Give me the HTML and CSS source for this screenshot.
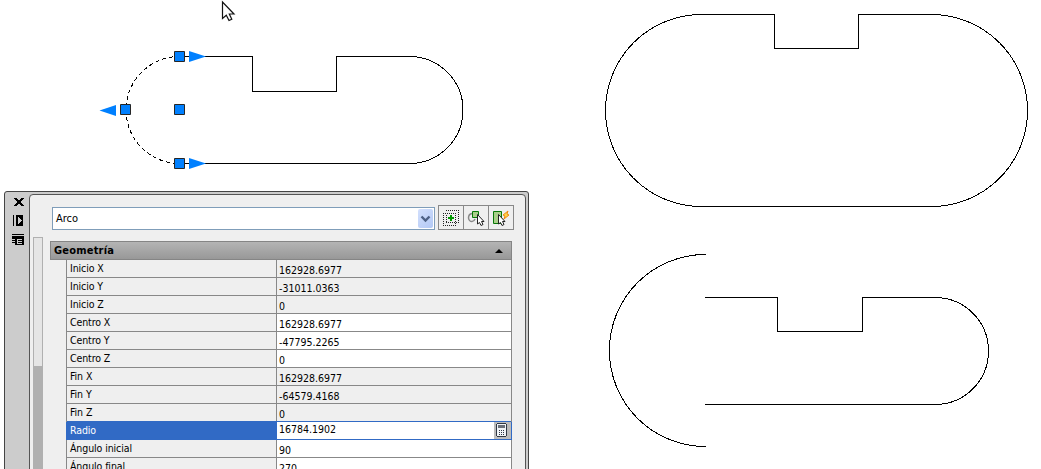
FILE: index.html
```html
<!DOCTYPE html>
<html lang="es">
<head>
<meta charset="utf-8">
<title>Propiedades</title>
<link rel="stylesheet" href="styles.css">
</head>
<body>
<main class="canvas">
  <svg class="drawing" width="1041" height="469" viewBox="0 0 1041 469">
    <g class="lines">
      <path d="M179.5 56.5H252.5V91.5H336.5V56.5H409.5A53.5 53.5 0 0 1 409.5 163.5H179.5"/>
      <path stroke-dasharray="4 3" d="M179.5 56.5A53.5 53.5 0 0 0 179.5 163.5"/>
      <path d="M701.5 14.5H774.5V48.5H858.5V14.5H931.5A96 96 0 0 1 931.5 206.5H701.5A96 96 0 0 1 701.5 14.5"/>
      <path d="M706 254.5H705.4A96 96 0 0 0 705.4 446.5H706"/>
      <path d="M705 297.5H777.5V331.5H862.5V297.5H935A53.5 53.5 0 0 1 935 404.5H705"/>
    </g>
    <g class="arrows">
      <path d="M189 51L206 56.5L189 62ZM189 158L206 163.5L189 169ZM116 105L99.500 110.5L116 116Z"/>
    </g>
    <g class="grips">
      <path d="M174.5 51.5h10v10h-10ZM120.5 104.500h10v10h-10ZM174.500 104.500h10v10h-10ZM174.500 158.500h10v10h-10Z"/>
    </g>
    <path class="pointer" d="M222.500 2V18.500L226.300 15.200L229 20.500L231.800 19.200L229.300 14H234Z"/>
  </svg>

  <section class="palette">
    <aside class="titlebar">
      <svg width="14" height="50" viewBox="0 0 14 50" shape-rendering="crispEdges">
        <path d="M3 1h3v1h1v1h2V2h1V1h3v1h-1v1h-1v1h-1v2h1v1h1v1h1v1h-3V8H9V7H7v1H6v1H3V8h1V7h1V6h1V4H5V3H4V2H3Z"/>
        <path d="M2 18h1v11H2ZM5 18h7v11H5Z"/>
        <path fill="#ccc" d="M7 20v7l4-3.500Z"/>
        <path d="M1 37h12v1H1ZM1 39h12v9H4v-2H1v-1h3v-1H1v-1h3v-1H1Z"/>
        <path fill="#ccc" d="M6 42h5v1H6ZM6 44h5v1H6ZM6 46h5v1H6ZM6 42h1v5H6Z"/>
      </svg>
    </aside>
    <div class="body">
      <div class="scroll"><div class="thumb"></div></div>
      <div class="content">
        <div class="tools">
          <div class="combo"><span>Arco</span>
            <span class="drop"><svg width="15" height="19" viewBox="0 0 15 19"><path fill="none" stroke="#4d6185" stroke-width="2.400" d="M3.500 7.500L7.500 11.500L11.500 7.500"/></svg></span>
          </div>
          <div class="buttons">
            <span class="tool"><svg width="24" height="23" viewBox="0 0 24 23" shape-rendering="crispEdges">
              <path fill="none" stroke="#222" stroke-dasharray="1 1" d="M7 4.500H20M19.500 4V17M4 7.500H17M4.500 7V20M4 19.500H17M16.500 7V20M7.500 9V17M7 16.500H20"/>
              <path fill="#009800" d="M11 9h2v2h2v2h-2v2h-2v-2H9v-2h2Z"/></svg></span>
            <span class="tool"><svg width="24" height="23" viewBox="0 0 24 23">
              <path fill="none" stroke="#888" stroke-width="1.500" d="M8 7.500Q4.500 8 4.500 12Q5 15.500 8 15.500Q10 15.500 11 13"/>
              <path fill="#aad08a" stroke="#087808" d="M8.500 5.500h6v6h-6Z"/>
              <path fill="#fff" stroke="#222" d="M13.500 8.500V18l2-1.500 1.500 3 2-1-1.500-3H20Z"/></svg></span>
            <span class="tool"><svg width="24" height="23" viewBox="0 0 24 23">
              <path fill="#aad08a" stroke="#087808" d="M4.500 5.500h8v12h-8Z"/>
              <path fill="#ffd34a" stroke="#f08a10" d="M19 5L14 9l2 1-1 3 5-4-2-1Z"/>
              <path fill="#fff" stroke="#222" d="M9.500 8.500V18l2-1.500 1.500 3 2-1-1.500-3H16Z"/></svg></span>
          </div>
        </div>
        <div class="group">
          <div class="head"><span>Geometría</span><i class="caret"></i></div>
          <div class="rows">
            <div class="row ro"><span class="name">Inicio X</span><span class="val">162928.6977</span></div>
            <div class="row ro"><span class="name">Inicio Y</span><span class="val">-31011.0363</span></div>
            <div class="row ro"><span class="name">Inicio Z</span><span class="val">0</span></div>
            <div class="row"><span class="name">Centro X</span><span class="val">162928.6977</span></div>
            <div class="row"><span class="name">Centro Y</span><span class="val">-47795.2265</span></div>
            <div class="row"><span class="name">Centro Z</span><span class="val">0</span></div>
            <div class="row ro"><span class="name">Fin X</span><span class="val">162928.6977</span></div>
            <div class="row ro"><span class="name">Fin Y</span><span class="val">-64579.4168</span></div>
            <div class="row ro before"><span class="name">Fin Z</span><span class="val">0</span></div>
            <div class="row selected"><span class="name">Radio</span><span class="val">16784.1902</span>
              <span class="calc"><svg width="17" height="17" viewBox="0 0 17 17" shape-rendering="crispEdges">
                <path fill="#303844" d="M3 1h9v1h1v12h-1v1H3v-1H2V2h1Z"/>
                <path fill="#f1f4f7" d="M3 2h9v12H3Z"/><path fill="#6b7079" d="M4 3h7v3H4Z"/>
                <path fill="#303844" d="M5 8h1v1H5ZM7 8h1v1H7ZM9 8h1v1H9ZM5 10h1v1H5ZM7 10h1v1H7ZM9 10h1v1H9ZM5 12h1v1H5ZM7 12h1v1H7ZM9 12h1v1H9Z"/></svg></span>
            </div>
            <div class="row"><span class="name">Ángulo inicial</span><span class="val">90</span></div>
            <div class="row"><span class="name">Ángulo final</span><span class="val">270</span></div>
          </div>
        </div>
      </div>
    </div>
  </section>
</main>
</body>
</html>
```
FILE: styles.css
```css
* { box-sizing: border-box; }
body { margin: 0; background: #fff; }
.canvas { position: relative; width: 1041px; height: 469px; overflow: hidden; font: 10.5px/17px "DejaVu Sans Condensed", "DejaVu Sans", sans-serif; color: #000; }
.drawing { display: block; }
.lines { fill: none; stroke: #000; shape-rendering: crispEdges; }
.arrows { fill: #0080ff; }
.grips { fill: #0080ff; stroke: #262626; }
.pointer { fill: #fff; stroke: #111; stroke-width: 1.2; }
.palette { position: absolute; left: 4px; top: 191px; width: 525px; height: 290px; display: flex; padding: 2px 2px 0 0; background: #ccc; border: 1px solid #444; border-radius: 3px 3px 0 0; }
.titlebar { width: 24px; padding: 3px 0 0 6px; }
.body { flex: 1; display: flex; background: #efefef; border: 1px solid #555; border-radius: 4px 4px 0 0; padding-left: 3px; }
.scroll { width: 10px; margin-top: 42px; background: #b0b0b0; }
.thumb { height: 129px; background: #e5e5e5; border: 1px solid #b0b0b0; border-bottom: 0; }
.content { padding: 10px 0 0 7px; }
.tools { display: flex; align-items: flex-end; gap: 3px; height: 25px; margin-left: 2px; }
.combo { width: 383px; height: 23px; display: flex; justify-content: space-between; padding: 1px 1px 1px 3px; background: #fff; border: 1px solid #7f9db9; font-size: 11px; line-height: 19px; }
.drop { width: 15px; height: 19px; background: linear-gradient(135deg, #d3e0fd, #b2c8f5); border-radius: 2px; }
.drop svg, .tool svg, .calc svg, .titlebar svg { display: block; }
.buttons { display: flex; height: 25px; border: 1px solid #888; }
.tool { width: 25px; border-right: 1px solid #888; }
.tool:last-child { width: 24px; border: 0; }
.group { width: 462px; margin-top: 11px; }
.head { height: 19px; display: flex; justify-content: space-between; align-items: center; padding: 0 8px 0 3px; background: linear-gradient(#b4b4b4, #989898); border: 1px solid #858585; font-weight: bold; font-size: 11px; letter-spacing: .2px; }
.caret { border: 4px solid transparent; border-top: 0; border-bottom: 4px solid #000; }
.rows { margin-left: 16px; border: solid #888; border-width: 0 1px; }
.row { height: 18px; display: flex; border-bottom: 1px solid #888; }
.name { width: 210px; padding-left: 3px; border-right: 1px solid #888; background: #efefef; line-height: 16px; letter-spacing: -.1px; }
.val { flex: 1; padding-left: 2px; background: #fff; line-height: 20px; height: 17px; }
.ro .val { background: #efefef; }
.before { border-color: #316ac5; }
.selected { border-color: #316ac5; box-shadow: 1px 0 #316ac5, -1px 0 #316ac5; }
.selected .name { background: #316ac5; border-color: #316ac5; color: #fff; }
.selected .val { line-height: 15px; }
.calc { width: 17px; background: #bcbcbc; }
```
